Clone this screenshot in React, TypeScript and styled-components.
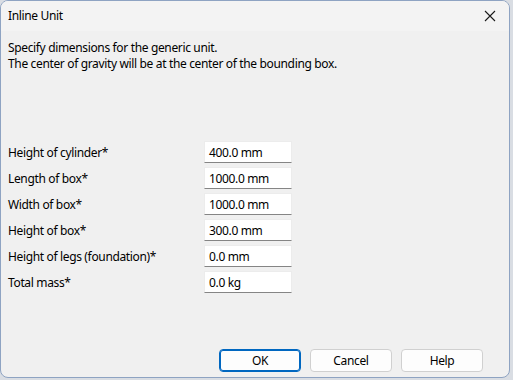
import React from 'react';
import styled, { createGlobalStyle } from 'styled-components';

const GlobalStyle = createGlobalStyle`
  html, body {
    margin: 0;
    padding: 0;
    background: #d9dde3;
  }
  body {
    font-family: 'Noto Sans', 'Liberation Sans', sans-serif;
    font-size: 12px;
    letter-spacing: -0.35px;
    color: #000;
  }
`

const Window = styled.div`
  display: flex;
  flex-direction: column;
  box-sizing: border-box;
  width: 510px;
  height: 378px;
  background: #f0f0f0;
  border: 1px solid #8ea3c2;
  border-radius: 8px;
  overflow: hidden;
`

const TitleBar = styled.div`
  display: flex;
  align-items: center;
  justify-content: space-between;
  height: 30px;
  padding-left: 7px;
  padding-right: 13px;
  background: #f3f3f3;
`

const Title = styled.span`
  font-size: 12px;
  margin-top: -1px;
`

const Close = styled.div`
  display: flex;
  align-items: center;
  justify-content: center;
  width: 12px;
  height: 12px;
`

const Body = styled.div`
  display: flex;
  flex-direction: column;
  flex: 1;
  padding: 9px 0 0 7px;
`

const Description = styled.div`
  line-height: 16px;
`

const Form = styled.div`
  display: grid;
  grid-template-columns: 196px 88px;
  grid-auto-rows: 22px;
  row-gap: 4px;
  margin-top: 69px;
  align-items: center;
`

const Label = styled.div`
  line-height: 16px;
  padding-top: 1px;
`

const Field = styled.div`
  box-sizing: border-box;
  height: 22px;
  padding-left: 4px;
  display: flex;
  align-items: center;
  background: #ffffff;
  border: 1px solid #ececec;
  border-bottom: 1px solid #858585;
`

const Footer = styled.div`
  display: flex;
  justify-content: flex-end;
  gap: 9px;
  margin-top: auto;
  padding: 0 26px 5px 0;
`

const Button = styled.button<{ $primary?: boolean }>`
  box-sizing: border-box;
  width: 82px;
  height: 23px;
  font-family: 'Noto Sans', 'Liberation Sans', sans-serif;
  font-size: 12px;
  letter-spacing: -0.35px;
  color: #000;
  background: #fdfdfd;
  border: 1px solid ${p => (p.$primary ? '#0067c0' : '#d0d0d0')};
  box-shadow: ${p => (p.$primary ? 'inset 0 0 0 1px #0067c0' : 'none')};
  border-radius: 4px;
  padding: 0;
`

const fields = [
  { label: 'Height of cylinder*', value: '400.0 mm' },
  { label: 'Length of box*', value: '1000.0 mm' },
  { label: 'Width of box*', value: '1000.0 mm' },
  { label: 'Height of box*', value: '300.0 mm' },
  { label: 'Height of legs (foundation)*', value: '0.0 mm' },
  { label: 'Total mass*', value: '0.0 kg' },
]

const App: React.FC = () => {
  return (
    <>
      <GlobalStyle />
      <Window>
        <TitleBar>
          <Title>Inline Unit</Title>
          <Close>
            <svg width="12" height="12" viewBox="0 0 12 12">
              <path d="M1 1 L11 11 M11 1 L1 11" stroke="#1a1a1a" strokeWidth="1.1" />
            </svg>
          </Close>
        </TitleBar>
        <Body>
          <Description>
            Specify dimensions for the generic unit.
            <br />
            The center of gravity will be at the center of the bounding box.
          </Description>
          <Form>
            {fields.map(f => (
              <React.Fragment key={f.label}>
                <Label>{f.label}</Label>
                <Field>{f.value}</Field>
              </React.Fragment>
            ))}
          </Form>
          <Footer>
            <Button $primary>OK</Button>
            <Button>Cancel</Button>
            <Button>Help</Button>
          </Footer>
        </Body>
      </Window>
    </>
  )
}

export default App
